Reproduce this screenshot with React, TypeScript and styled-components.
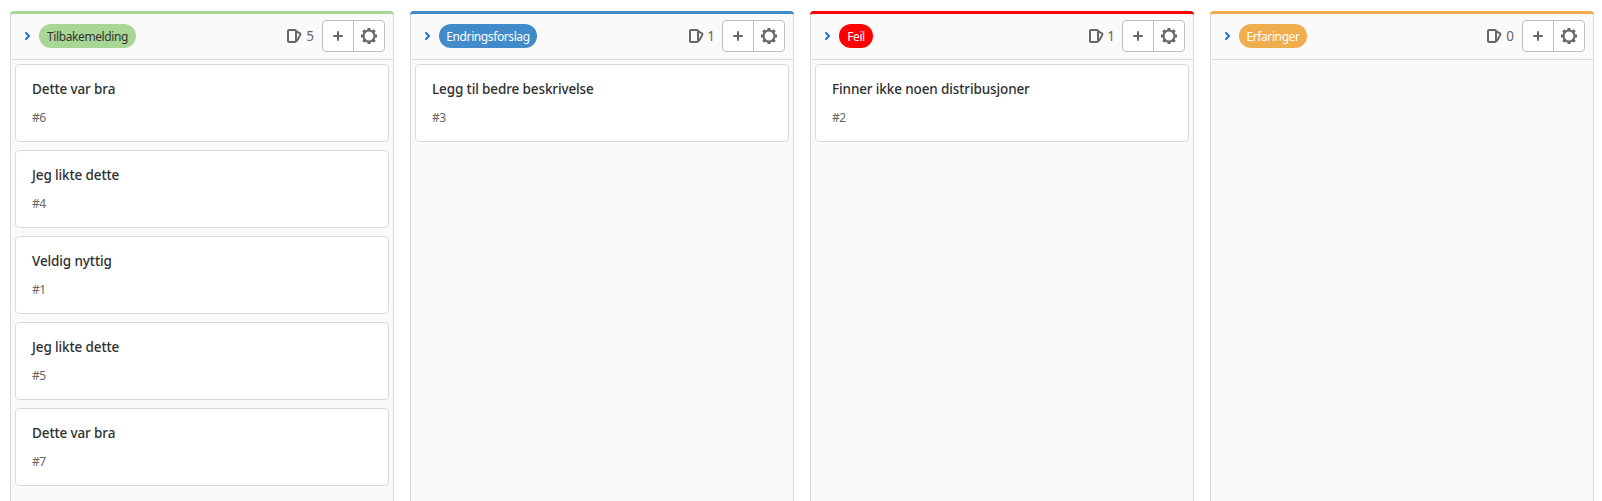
import React from "react";
import styled, { createGlobalStyle } from "styled-components";

const GlobalStyle = createGlobalStyle`
  *, *::before, *::after { box-sizing: border-box; }
  html, body { margin: 0; background: #fff; overflow: hidden; }
  body { font-family: "Noto Sans", "Open Sans", sans-serif; color: #303030; }
`;

const Board = styled.main`
  display: flex;
  gap: 16px;
  height: 501px;
  padding: 11px 8px 0 10px;
  overflow: hidden;
`;

const Column = styled.section`
  flex: 0 0 384px;
  height: 520px;
  background: #fafafa;
  border: 1px solid #dbdbdb;
  border-top: 0;
  border-radius: 4px 4px 0 0;
`;

const ColumnHeader = styled.header<{ $color: string }>`
  display: flex;
  align-items: center;
  height: 49px;
  margin: 0 -1px;
  padding: 0 9px 1px 13px;
  border-top: 3px solid ${(p) => p.$color};
  border-radius: 4px 4px 0 0;
  border-bottom: 1px solid #dbdbdb;
`;

const Toggle = styled.button`
  display: flex;
  width: 10px;
  height: 16px;
  margin-right: 6px;
  padding: 0;
  border: 0;
  background: none;
  color: #1f75cb;
`;

const Label = styled.span<{ $color: string; $text: string; $width: number }>`
  width: ${(p) => p.$width}px;
  height: 24px;
  border-radius: 12px;
  background: ${(p) => p.$color};
  color: ${(p) => p.$text};
  font-size: 12px;
  line-height: 25px;
  text-align: center;
  white-space: nowrap;
  letter-spacing: -0.4px;
`;

const Count = styled.span`
  display: flex;
  align-items: center;
  gap: 4px;
  margin-left: auto;
  margin-right: 8px;
  color: #666;
  font-size: 13.5px;
  line-height: 20px;
`;

const Digit = styled.span<{ $narrow: boolean }>`
  display: flex;
  justify-content: center;
  width: ${(p) => (p.$narrow ? 6 : 8)}px;
`;

const ButtonGroup = styled.div`
  display: flex;
  width: 63px;
  height: 32px;
  border: 1px solid #bfbfbf;
  border-radius: 4px;
  background: #fff;
`;

const IconButton = styled.button`
  display: flex;
  flex: 1;
  align-items: center;
  justify-content: center;
  padding: 0;
  border: 0;
  background: none;
  color: #666;

  & + & { border-left: 1px solid #bfbfbf; }
`;

const CardList = styled.ul`
  display: flex;
  flex-direction: column;
  gap: 8px;
  margin: 0;
  padding: 4px;
  list-style: none;
`;

const Card = styled.li`
  height: 78px;
  padding: 14px 16px;
  border: 1px solid #dbdbdb;
  border-radius: 4px;
  background: #fff;
`;

const CardTitle = styled.h4`
  margin: 0;
  font-size: 13.5px;
  font-weight: 500;
  line-height: 20px;
  letter-spacing: -0.12px;
  white-space: nowrap;
`;

const CardNumber = styled.div`
  margin-top: 10px;
  color: #666;
  font-size: 12px;
  line-height: 18px;
  letter-spacing: -0.6px;
`;

const ChevronIcon = () => (
  <svg width="10" height="16" viewBox="0 0 10 16" fill="none" stroke="currentColor" strokeWidth="2" strokeLinecap="round" strokeLinejoin="round">
    <path d="M3 5l3 3-3 3" />
  </svg>
);

const IssuesIcon = () => (
  <svg width="15" height="16" viewBox="0 0 15 16" fill="none" stroke="currentColor" strokeWidth="2" strokeLinejoin="round">
    <rect x="1" y="2" width="8" height="12" rx="1" />
    <path d="M9.6 3.4l3.5 2.2c.4.3.5.6.3 1L10 13" />
  </svg>
);

const PlusIcon = () => (
  <svg width="16" height="16" viewBox="0 0 16 16" fill="none" stroke="currentColor" strokeWidth="2" strokeLinecap="round">
    <path d="M8 4v8M4 8h8" />
  </svg>
);

const GearIcon = () => (
  <svg width="16" height="16" viewBox="0 0 16 16" fill="none" stroke="currentColor">
    <circle cx="8" cy="8" r="5.5" strokeWidth="2.1" />
    <path
      d="M8 0v2.5M8 13.5V16M0 8h2.5M13.5 8H16M2.3 2.3l2 2M11.7 11.7l2 2M13.7 2.3l-2 2M4.3 11.7l-2 2"
      strokeWidth="3"
    />
  </svg>
);

interface Issue {
  id: number;
  title: string;
}

interface List {
  name: string;
  color: string;
  text: string;
  width: number;
  issues: Issue[];
}

const lists: List[] = [
  {
    name: "Tilbakemelding",
    color: "#a8d695",
    text: "#333",
    width: 97,
    issues: [
      { id: 6, title: "Dette var bra" },
      { id: 4, title: "Jeg likte dette" },
      { id: 1, title: "Veldig nyttig" },
      { id: 5, title: "Jeg likte dette" },
      { id: 7, title: "Dette var bra" },
    ],
  },
  { name: "Endringsforslag", color: "#428bca", text: "#fff", width: 98, issues: [{ id: 3, title: "Legg til bedre beskrivelse" }] },
  { name: "Feil", color: "#ff0000", text: "#fff", width: 34, issues: [{ id: 2, title: "Finner ikke noen distribusjoner" }] },
  { name: "Erfaringer", color: "#f0ad4e", text: "#fff", width: 68, issues: [] },
];

export default function App() {
  return (
    <>
      <GlobalStyle />
      <Board>
        {lists.map((list) => (
          <Column key={list.name}>
            <ColumnHeader $color={list.color}>
              <Toggle aria-label="Vis eller skjul liste"><ChevronIcon /></Toggle>
              <Label $color={list.color} $text={list.text} $width={list.width}>{list.name}</Label>
              <Count>
                <IssuesIcon />
                <Digit $narrow={list.issues.length === 1}>{list.issues.length}</Digit>
              </Count>
              <ButtonGroup>
                <IconButton aria-label="Ny sak"><PlusIcon /></IconButton>
                <IconButton aria-label="Innstillinger"><GearIcon /></IconButton>
              </ButtonGroup>
            </ColumnHeader>
            <CardList>
              {list.issues.map((issue) => (
                <Card key={issue.id}>
                  <CardTitle>{issue.title}</CardTitle>
                  <CardNumber>#{issue.id}</CardNumber>
                </Card>
              ))}
            </CardList>
          </Column>
        ))}
      </Board>
    </>
  );
}
